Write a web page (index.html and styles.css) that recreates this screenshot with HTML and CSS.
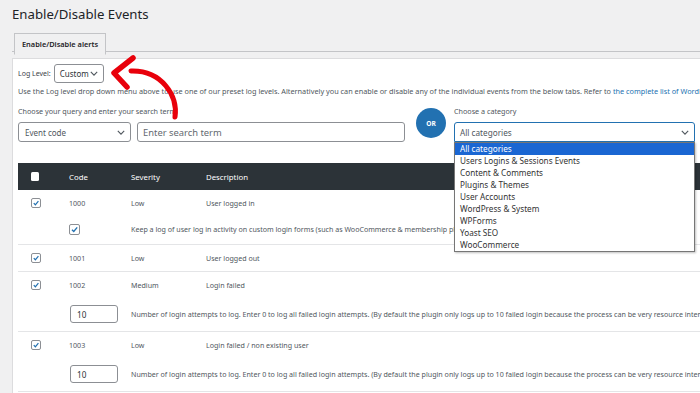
FILE: index.html
```html
<!DOCTYPE html>
<html>
<head>
<meta charset="utf-8">
<link rel="stylesheet" href="styles.css">
</head>
<body>
<div class="wrap">
  <h1 class="title">Enable/Disable Events</h1>
  <div class="tabs"><span class="tab">Enable/Disable alerts</span></div>
  <div class="panel">
    <div class="loglevel">
      <span class="lbl">Log Level:</span>
      <span class="select sel-custom">Custom <svg class="chev" viewBox="0 0 10 6" width="8" height="5"><path d="M1 1l4 4 4-4" fill="none" stroke="#50575e" stroke-width="1.4"/></svg></span>
    </div>
    <p class="desc">Use the Log level drop down menu above to use one of our preset log levels. Alternatively you can enable or disable any of the individual events from the below tabs. Refer to <a class="link">the complete list of WordPress activity log event IDs</a> for reference.</p>
    <div class="query">
      <div class="qleft">
        <div class="qlabel">Choose your query and enter your search term</div>
        <div class="qinputs">
          <span class="select sel-event">Event code <svg class="chev" viewBox="0 0 10 6" width="8" height="5"><path d="M1 1l4 4 4-4" fill="none" stroke="#50575e" stroke-width="1.4"/></svg></span>
          <span class="input search">Enter search term</span>
        </div>
      </div>
      <div class="or">OR</div>
      <div class="qright">
        <div class="qlabel">Choose a category</div>
        <div class="catwrap">
          <span class="select sel-cat">All categories <svg class="chev" viewBox="0 0 10 6" width="8" height="5"><path d="M1 1l4 4 4-4" fill="none" stroke="#50575e" stroke-width="1.4"/></svg></span>
          <ul class="dropdown">
            <li class="active">All categories</li>
            <li>Users Logins &amp; Sessions Events</li>
            <li>Content &amp; Comments</li>
            <li>Plugins &amp; Themes</li>
            <li>User Accounts</li>
            <li>WordPress &amp; System</li>
            <li>WPForms</li>
            <li>Yoast SEO</li>
            <li>WooCommerce</li>
          </ul>
        </div>
      </div>
    </div>

    <div class="table">
      <div class="thead">
        <span class="cell"><span class="hcb"></span></span>
        <span class="cell">Code</span>
        <span class="cell">Severity</span>
        <span class="cell">Description</span>
      </div>

      <div class="row">
        <div class="main">
          <span class="cell"><span class="cb"><svg viewBox="0 0 10 10"><path d="M2.2 5.2l2 2 3.8-4.6" fill="none" stroke="#2271b1" stroke-width="1.5"/></svg></span></span>
          <span class="cell">1000</span>
          <span class="cell">Low</span>
          <span class="cell">User logged in</span>
        </div>
        <div class="sub sub-cb">
          <span class="cell"></span>
          <span class="cell"><span class="cb cb-lg"><svg viewBox="0 0 10 10"><path d="M2.2 5.2l2 2 3.8-4.6" fill="none" stroke="#2271b1" stroke-width="1.5"/></svg></span></span>
          <span class="cell span2">Keep a log of user log in activity on custom login forms (such as WooCommerce &amp; membership plugins)</span>
        </div>
      </div>

      <div class="row single">
        <div class="main">
          <span class="cell"><span class="cb"><svg viewBox="0 0 10 10"><path d="M2.2 5.2l2 2 3.8-4.6" fill="none" stroke="#2271b1" stroke-width="1.5"/></svg></span></span>
          <span class="cell">1001</span>
          <span class="cell">Low</span>
          <span class="cell">User logged out</span>
        </div>
      </div>

      <div class="row">
        <div class="main">
          <span class="cell"><span class="cb"><svg viewBox="0 0 10 10"><path d="M2.2 5.2l2 2 3.8-4.6" fill="none" stroke="#2271b1" stroke-width="1.5"/></svg></span></span>
          <span class="cell">1002</span>
          <span class="cell">Medium</span>
          <span class="cell">Login failed</span>
        </div>
        <div class="sub sub-in">
          <span class="cell"></span>
          <span class="cell"><span class="num">10</span></span>
          <span class="cell span2">Number of login attempts to log. Enter 0 to log all failed login attempts. (By default the plugin only logs up to 10 failed login because the process can be very resource intensive in case of a brute force attack)</span>
        </div>
      </div>

      <div class="row">
        <div class="main">
          <span class="cell"><span class="cb"><svg viewBox="0 0 10 10"><path d="M2.2 5.2l2 2 3.8-4.6" fill="none" stroke="#2271b1" stroke-width="1.5"/></svg></span></span>
          <span class="cell">1003</span>
          <span class="cell">Low</span>
          <span class="cell">Login failed / non existing user</span>
        </div>
        <div class="sub sub-in">
          <span class="cell"></span>
          <span class="cell"><span class="num">10</span></span>
          <span class="cell span2">Number of login attempts to log. Enter 0 to log all failed login attempts. (By default the plugin only logs up to 10 failed login because the process can be very resource intensive in case of a brute force attack)</span>
        </div>
      </div>
    </div>
  </div>
</div>
<svg class="arrow" width="700" height="393" viewBox="0 0 700 393">
  <path d="M175 117 C178 96 162 70 131 71" fill="none" stroke="#e8000b" stroke-width="5" stroke-linecap="round"/>
  <path d="M133 58 L114 73 L127 87" fill="none" stroke="#e8000b" stroke-width="5.5" stroke-linecap="round" stroke-linejoin="round"/>
</svg>
</body>
</html>
```
FILE: styles.css
```css
* { box-sizing: border-box; }
html, body { margin: 0; padding: 0; }
body {
  width: 700px;
  height: 393px;
  overflow: hidden;
  background: #f0f0f1;
  font-family: "Noto Sans", "Open Sans", sans-serif;
  color: #50575e;
  position: relative;
}
.wrap { padding-left: 12px; }
.title {
  margin: 0;
  padding: 5px 0 0 0;
  font-size: 13.2px;
  line-height: 19px;
  font-weight: 400;
  color: #1d2327;
  height: 30px;
}
.tabs {
  border-bottom: 1px solid #c3c4c7;
  padding-left: 2px;
  height: 22px;
}
.tab {
  display: inline-block;
  height: 22px;
  line-height: 20px;
  padding: 0 7px;
  white-space: nowrap;
  border: 1px solid #c3c4c7;
  border-bottom: 1px solid #f0f0f1;
  background: #f0f0f1;
  font-size: 7.4px;
  font-weight: 600;
  color: #1d2327;
}
.panel {
  margin-top: 6px;
  background: #fff;
  border-left: 1px solid #dcdcde;
  border-top: 1px solid #dcdcde;
  padding-left: 5px;
  height: 400px;
  white-space: nowrap;
  overflow: hidden;
}
.loglevel {
  display: flex;
  align-items: center;
  gap: 3px;
  margin-top: 5px;
  height: 19px;
}
.lbl { font-size: 7px; color: #3c434a; }
.select {
  display: flex;
  align-items: center;
  justify-content: space-between;
  border: 1px solid #8c8f94;
  border-radius: 3px;
  background: #fff;
  color: #2c3338;
  height: 19px;
  padding: 0 5px 0 5px;
  font-size: 8px;
}
.sel-custom { width: 50px; }
.chev { flex: none; }
.desc {
  margin: 3px 0 0 0;
  font-size: 7.3px;
  line-height: 10px;
  color: #50575e;
}
.link { color: #2271b1; }
.query {
  display: flex;
  align-items: flex-start;
  margin-top: 10px;
}
.qlabel {
  font-size: 7.2px;
  line-height: 10px;
  height: 16px;
  color: #50575e;
}
.qinputs { display: flex; gap: 6px; }
.sel-event { width: 113px; height: 20px; font-size: 8px; color: #50575e; padding-left: 6px; }
.input {
  display: inline-flex;
  align-items: center;
  border: 1px solid #8c8f94;
  border-radius: 3px;
  height: 20px;
  padding: 0 5px;
  font-size: 9.4px;
  color: #646970;
}
.search { width: 268px; }
.or {
  flex: none;
  width: 30px;
  height: 30px;
  border-radius: 50%;
  background: #2271b1;
  color: #fff;
  font-size: 6.6px;
  font-weight: 700;
  display: flex;
  align-items: center;
  justify-content: center;
  margin: 2px 0 0 11px;
}
.qright { margin-left: 8px; }
.catwrap { position: relative; }
.sel-cat {
  width: 241px;
  height: 20px;
  border-color: #2271b1;
  border-radius: 3px 3px 0 0;
  color: #50575e;
  font-size: 8.2px;
}
.dropdown {
  position: absolute;
  left: 0;
  top: 20px;
  width: 241px;
  margin: 0;
  padding: 0;
  list-style: none;
  background: #fff;
  border: 1px solid #767676;
  box-shadow: 1px 1px 2px rgba(0,0,0,0.25);
  z-index: 5;
}
.dropdown li {
  height: 12px;
  line-height: 12px;
  padding-left: 5px;
  font-size: 8.2px;
  color: #333;
}
.dropdown li.active { background: #1a66d2; color: #fff; }
.table { margin-top: 21px; }
.thead {
  display: grid;
  grid-template-columns: 51px 62px 75px 1fr;
  background: #2c3338;
  height: 27px;
  align-items: center;
  color: #fff;
  font-size: 7.8px;
}
.thead .cell:first-child { padding-left: 13px; display: flex; }
.hcb {
  width: 8px;
  height: 9px;
  background: #fff;
  border-radius: 1.5px;
}
.row { border-bottom: 1px solid #e4e5e7; }
.main, .sub {
  display: grid;
  grid-template-columns: 51px 62px 75px 1fr;
  align-items: center;
  font-size: 7.1px;
  color: #50575e;
}
.main { height: 24px; padding-top: 1px; }
.single .main { height: 26px; padding-top: 0; }
.main .cell:first-child { padding-left: 13px; display: flex; }
.sub .cell:nth-child(2) { display: flex; }
.sub-cb { height: 30px; }
.sub-in { height: 35px; padding-top: 1px; }
.span2 { grid-column: 3 / 5; }
.cb {
  width: 10px;
  height: 10px;
  border: 1px solid #8c8f94;
  border-radius: 2px;
  background: #fff;
  display: flex;
}
.cb svg { width: 100%; height: 100%; }
.cb-lg { width: 11px; height: 11px; }
.num {
  width: 48px;
  height: 18px;
  border: 1px solid #8c8f94;
  border-radius: 3px;
  margin-left: 1px;
  padding-left: 6px;
  display: flex;
  align-items: center;
  font-size: 8.2px;
  color: #2c3338;
}
.arrow {
  position: absolute;
  left: 0;
  top: 0;
  pointer-events: none;
  z-index: 10;
}
```
